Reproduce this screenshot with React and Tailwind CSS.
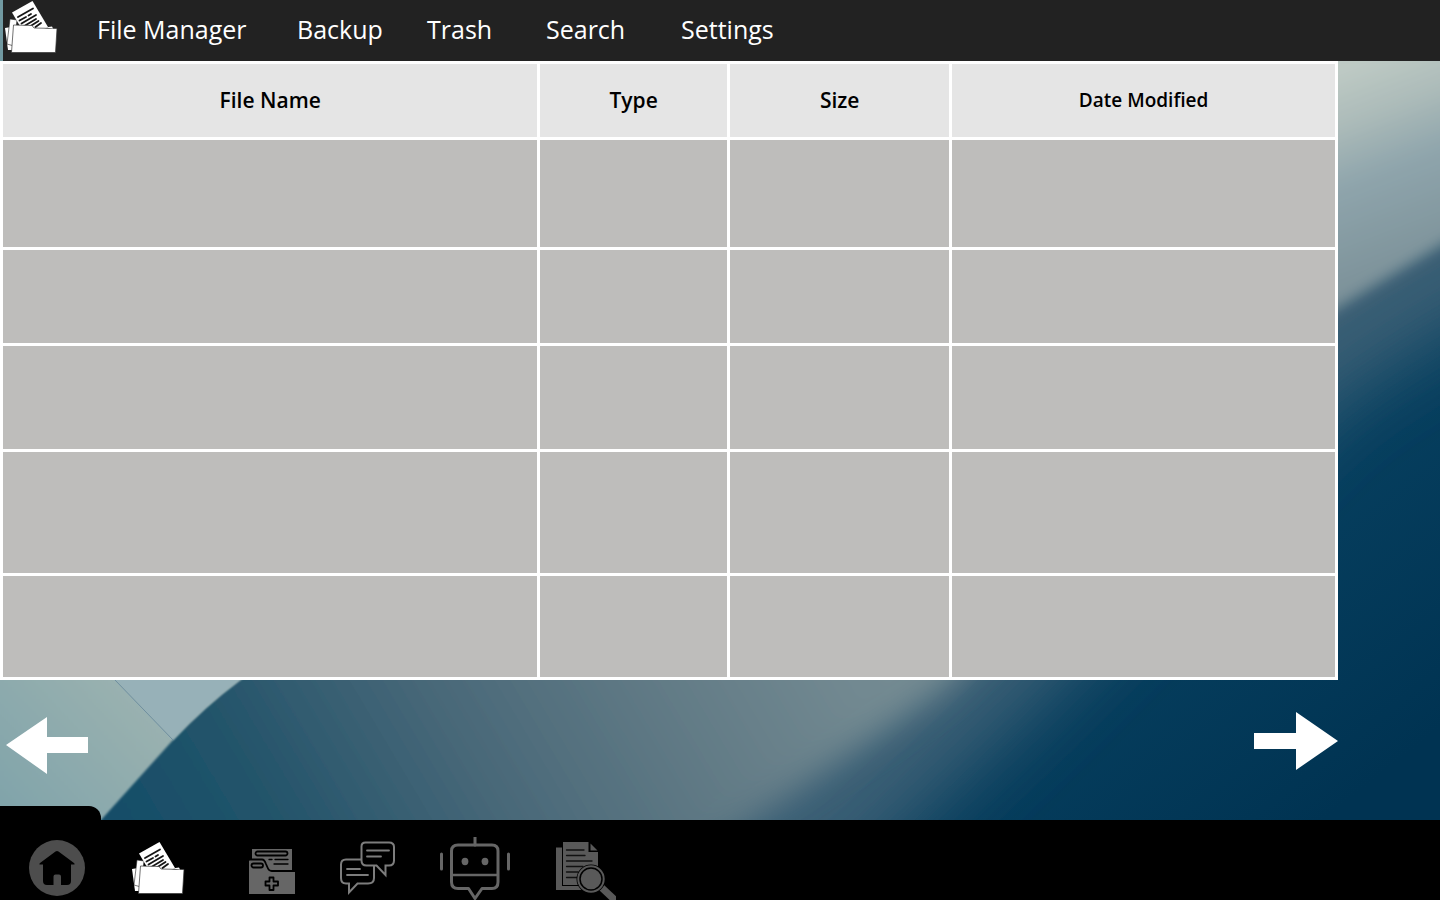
const navItems = [
  { label: 'File Manager', cls: 'w-[200px]' },
  { label: 'Backup', cls: 'w-[130px]' },
  { label: 'Trash', cls: 'w-[119px]' },
  { label: 'Search', cls: 'w-[135px]' },
  { label: 'Settings', cls: 'w-[120px]' },
];

const rowHeights = ['h-[107px]', 'h-[93px]', 'h-[103px]', 'h-[121px]', 'h-[101px]'];

function FilesIcon({ className }) {
  return (
    <svg viewBox="0 0 54 54" className={className} aria-hidden="true">
      <path d="M0 28 6 27 8 50 3 50Z" fill="#fff" />
      <path d="M5 19 12 20 9 46 2 44Z" fill="#fff" stroke="#222" strokeWidth="0.6" />
      <path d="M7 12.500 27.500 1 43 27 22 38Z" fill="#fff" />
      <g stroke="#161616" strokeWidth="1.800" strokeLinecap="round">
        <path d="M13 17 28 8.500" />
        <path d="M14.500 20.500 21 17M23.500 15.500 26 14" />
        <path d="M16.500 23.500 31 15" />
        <path d="M18.500 26.500 31 19" />
        <path d="M24 27 33.500 21" />
        <path d="M30.500 27 36 23" />
      </g>
      <path d="M8.500 25 27 25.500 29 28 52 28.500 50.500 52.500 6.500 52.500Z" fill="#fff" stroke="#333" strokeWidth="0.7" />
      <path d="M40 27.500 47 26.500 48 28.500" fill="#fff" />
    </svg>
  );
}

function HomeIcon() {
  return (
    <svg viewBox="0 0 56 56" className="h-14 w-14" aria-hidden="true">
      <circle cx="28" cy="28" r="28" fill="#4d4d4d" />
      <path
        d="M26.500 11.500Q28 10.300 29.500 11.500L45 23Q46.500 24.500 44.500 24.600H42V41Q42 45 38 45H32V36.500Q32 34.500 30 34.500H26.500Q24.500 34.500 24.500 36.500V45H18Q14 45 14 41V24.600H11.500Q9.500 24.500 11 23Z"
        fill="#000"
      />
    </svg>
  );
}

function BackupIcon() {
  return (
    <svg viewBox="0 0 46 46" className="h-[46px] w-[46px]" aria-hidden="true">
      <path d="M3 0H43V21H3Z" fill="#666" />
      <path d="M0 12Q0 11 1 11H13Q16 11 17 14L19 19Q20 22.500 23 22.500H46V45H0Z" fill="#666" />
      <g fill="none" stroke="#000" strokeWidth="1.800" strokeLinecap="round">
        <rect x="6.500" y="2.500" width="32" height="4" rx="2" />
        <path d="M0 10.500H13Q15.500 10.500 17 15L19 19.500Q20 22 23 22H46" />
        <rect x="2.500" y="14.500" width="11.500" height="4" rx="2" />
        <path d="M20 10.500H23M26 10.500H39M25 15H39" strokeWidth="1.300" />
        <path
          d="M20.500 28.500H24.500V32.500H29V36.500H24.500V41H20.500V36.500H16.500V32.500H20.500Z"
          strokeLinejoin="round"
        />
      </g>
    </svg>
  );
}

function ChatIcon() {
  return (
    <svg viewBox="0 0 56 54" className="h-[54px] w-14" fill="none" stroke="#7d7d7d" strokeWidth="2" aria-hidden="true">
      <path d="M25.500 1.500H49Q54 1.500 54 6V19.500Q54 24.500 49 24.500H45.500V34L36.500 24.500H26.500Q21.500 24.500 21.500 19.500V5.500Q21.500 1.500 25.500 1.500Z" />
      <path d="M21 18.500H6Q1 18.500 1 23.500V37Q1 42.500 6 42.500H9V51.500L17.500 42.500H28Q34 42.500 34 37V25" />
      <g strokeLinecap="round" strokeWidth="1.800">
        <path d="M27 9.500H49M27 15.500H41M7 28H20M7 34H28" />
      </g>
    </svg>
  );
}

function RobotIcon() {
  return (
    <svg viewBox="0 0 70 63" className="h-[63px] w-[70px]" fill="none" stroke="#666" strokeWidth="3" aria-hidden="true">
      <path d="M18 8H52Q58 8 58 14V45Q58 51.500 52 51.500H42L35 61.500 28.500 51.500H18Q11.500 51.500 11.500 45V14Q11.500 8 18 8Z" strokeLinejoin="round" />
      <path d="M11.500 38H58" strokeWidth="2.500" />
      <path d="M35 0V8M1.500 17V32M68.500 17V32" strokeLinecap="round" />
      <ellipse cx="25" cy="24.500" rx="3.400" ry="3.700" fill="#666" stroke="none" />
      <ellipse cx="45" cy="24.500" rx="3.400" ry="3.700" fill="#666" stroke="none" />
    </svg>
  );
}

function SearchFileIcon() {
  return (
    <svg viewBox="0 0 60 58" className="h-[58px] w-[60px]" aria-hidden="true">
      <path d="M0 5.500H6V44H30V48H0Z" fill="#595959" />
      <path d="M7 0H32.500V10H42V43H7Z" fill="#595959" />
      <path d="M34.500 1.500 41.500 8.500H34.500Z" fill="#595959" />
      <path d="M10.500 8H28M10.500 13.500H29M10.500 19H36M10.500 24.500H27M10.500 30H22M10.500 35.500H21" stroke="#111" strokeWidth="1.300" strokeLinecap="round" />
      <path d="M43 48 48 43 64 58 59 63Z" fill="#595959" />
      <circle cx="35" cy="37" r="14.500" fill="#000" />
      <circle cx="35" cy="37" r="12.700" fill="#595959" stroke="#595959" strokeWidth="2" />
      <circle cx="35" cy="37" r="11" fill="#595959" stroke="#000" strokeWidth="1.500" />
    </svg>
  );
}

const dockItems = [
  { label: 'Home', Icon: HomeIcon, cls: 'w-[103px] pt-5' },
  { label: 'Files', Icon: () => <FilesIcon className="h-[54px] w-[54px]" />, cls: 'w-[117px] pt-[21px]' },
  { label: 'Backup', Icon: BackupIcon, cls: 'w-[91px] pt-[29px]' },
  { label: 'Messages', Icon: ChatIcon, cls: 'w-[100px] pt-[21px]' },
  { label: 'Assistant', Icon: RobotIcon, cls: 'w-[116px] pt-[17px]' },
  { label: 'Search files', Icon: SearchFileIcon, cls: 'w-[60px] pt-[22px]' },
];

function Wallpaper() {
  return (
    <svg
      viewBox="0 61 1440 759"
      preserveAspectRatio="none"
      className="absolute inset-0 h-full w-full"
      aria-hidden="true"
    >
      <defs>
        <linearGradient id="deep" gradientUnits="userSpaceOnUse" x1="1180" y1="480" x2="1400" y2="760">
          <stop offset="0" stopColor="#084262" />
          <stop offset="1" stopColor="#003352" />
        </linearGradient>
        <linearGradient id="slope" gradientUnits="userSpaceOnUse" x1="120" y1="820" x2="1400" y2="61">
          <stop offset="0" stopColor="#164e68" />
          <stop offset="0.087" stopColor="#22536a" />
          <stop offset="0.232" stopColor="#4a6979" />
          <stop offset="0.36" stopColor="#627b86" />
          <stop offset="0.47" stopColor="#728991" />
          <stop offset="1" stopColor="#8499a0" />
        </linearGradient>
        <linearGradient id="sky" gradientUnits="userSpaceOnUse" x1="1330" y1="70" x2="1410" y2="280">
          <stop offset="0" stopColor="#bfcbc5" />
          <stop offset="0.25" stopColor="#acbbb9" />
          <stop offset="0.5" stopColor="#8fa5ac" />
          <stop offset="1" stopColor="#7b9098" />
        </linearGradient>
        <linearGradient id="pale" gradientUnits="userSpaceOnUse" x1="0" y1="820" x2="140" y2="690">
          <stop offset="0" stopColor="#7fa3aa" />
          <stop offset="1" stopColor="#9bb2b0" />
        </linearGradient>
        <filter id="soft" x="-20%" y="-20%" width="140%" height="140%">
          <feGaussianBlur stdDeviation="16" />
        </filter>
        <filter id="wide" x="-20%" y="-20%" width="140%" height="140%">
          <feGaussianBlur stdDeviation="38" />
        </filter>
        <filter id="medium" x="-20%" y="-20%" width="140%" height="140%">
          <feGaussianBlur stdDeviation="7" />
        </filter>
        <filter id="fine">
          <feGaussianBlur stdDeviation="1" />
        </filter>
      </defs>
      <rect y="61" width="1440" height="759" fill="url(#deep)" />
      <path d="M-200 -100H1700V190L1440 335 1338 400 1030 710 830 900H-200Z" fill="#3a5f74" filter="url(#wide)" />
      <path d="M-200 -100H1300V330L945 690 680 870 600 950H-200Z" fill="url(#slope)" filter="url(#soft)" />
      <path d="M1200 -40H1560V174L1440 246 1338 308 1200 400Z" fill="url(#sky)" filter="url(#medium)" />
      <path d="M-20 600H330L240 680Q205 706 173 740L101 820 80 850H-20Z" fill="url(#pale)" filter="url(#fine)" />
      <path d="M60 620H330L240 680Q205 706 173 740L115 680Z" fill="#97b1b8" filter="url(#fine)" />
      <path d="M115 680 173 740" stroke="#6f8f9f" strokeWidth="1" />
    </svg>
  );
}

export default function App() {
  return (
    <div className="flex min-h-screen flex-col overflow-hidden bg-black font-['Open_Sans',sans-serif]">
      <header className="flex h-[61px] items-center border-l-3 border-[#7199a1] bg-[#222] pb-1">
        <FilesIcon className="mb-1 ml-0.5 h-[54px] w-[54px] shrink-0" />
        <nav className="ml-[38px] flex">
          {navItems.map(({ label, cls }) => (
            <a key={label} href="#" className={`${cls} block whitespace-nowrap text-[25px] leading-8 font-normal text-white`}>
              {label}
            </a>
          ))}
        </nav>
      </header>

      <main className="relative flex grow flex-col">
        <Wallpaper />
        <table className="relative w-[92.9%] table-fixed border-separate border-spacing-[3px] bg-white">
          <colgroup>
            <col className="w-[40.4%]" />
            <col className="w-[14.1%]" />
            <col className="w-[16.6%]" />
            <col />
          </colgroup>
          <thead>
            <tr className="h-[73px] bg-[#e5e5e5] text-[21px] text-black">
              <th scope="col" className="p-0 font-semibold">File Name</th>
              <th scope="col" className="p-0 font-semibold">Type</th>
              <th scope="col" className="p-0 font-semibold">Size</th>
              <th scope="col" className="p-0 text-[19px] font-semibold">Date Modified</th>
            </tr>
          </thead>
          <tbody>
            {rowHeights.map((h) => (
              <tr key={h} className={`${h} bg-[#bebdbb]`}>
                <td className="p-0" />
                <td className="p-0" />
                <td className="p-0" />
                <td className="p-0" />
              </tr>
            ))}
          </tbody>
        </table>
        <div className="relative flex w-[92.9%] grow items-start justify-between pl-1.5">
          <button type="button" aria-label="Previous page" className="mt-9">
            <svg viewBox="0 0 82 58" className="h-[58px] w-[82px]" fill="#fff" aria-hidden="true">
              <path d="M0 29 41 1V21H82V37H41V58Z" />
            </svg>
          </button>
          <button type="button" aria-label="Next page" className="mt-8">
            <svg viewBox="0 0 84 58" className="h-[58px] w-[84px]" fill="#fff" aria-hidden="true">
              <path d="M84 29 42 0V21H0V37H42V58Z" />
            </svg>
          </button>
        </div>
        <div className="absolute bottom-0 left-0 h-3.5 w-[101px] rounded-tr-xl bg-black" />
      </main>

      <footer className="h-20 bg-black">
        <nav className="flex h-20 items-start overflow-hidden pl-[29px]" aria-label="Dock">
          {dockItems.map(({ label, Icon, cls }) => (
            <div key={label} className={`${cls} shrink-0`}>
              <button type="button" aria-label={label} className="block">
                <Icon />
              </button>
            </div>
          ))}
        </nav>
      </footer>
    </div>
  );
}
